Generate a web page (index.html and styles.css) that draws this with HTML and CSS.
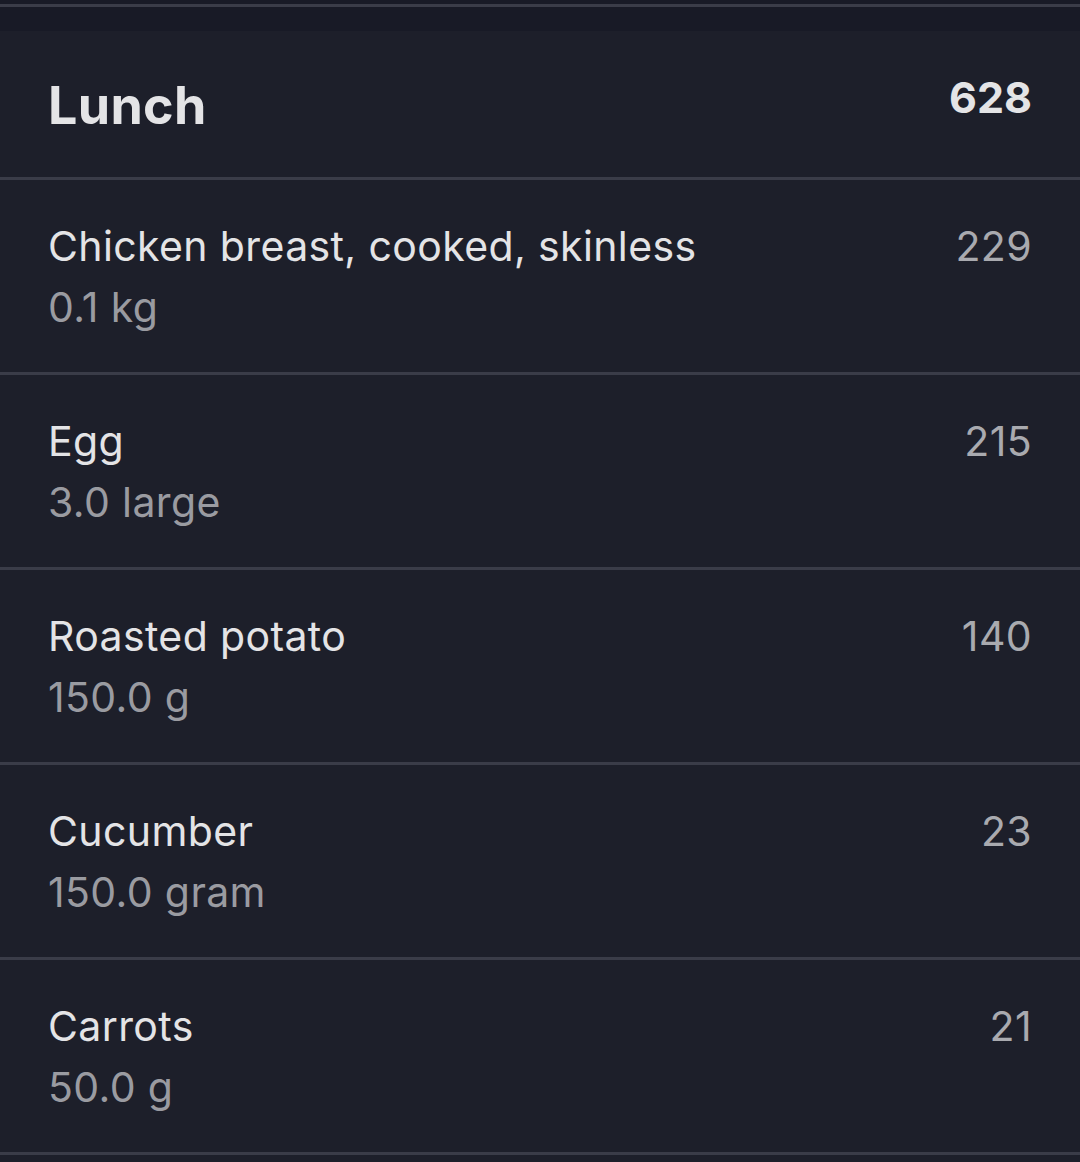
FILE: index.html
```html
<!DOCTYPE html>
<html>
<head>
<meta charset="utf-8">
<link rel="stylesheet" href="styles.css">
</head>
<body>
<div class="topbar"><div class="topline"></div></div>
<div class="panel">
  <div class="header">
    <div class="title">Lunch</div>
    <div class="total">628</div>
  </div>
  <div class="item">
    <div class="info"><div class="name">Chicken breast, cooked, skinless</div><div class="qty">0.1 kg</div></div>
    <div class="cal">229</div>
  </div>
  <div class="item">
    <div class="info"><div class="name">Egg</div><div class="qty">3.0 large</div></div>
    <div class="cal">215</div>
  </div>
  <div class="item">
    <div class="info"><div class="name">Roasted potato</div><div class="qty">150.0 g</div></div>
    <div class="cal">140</div>
  </div>
  <div class="item">
    <div class="info"><div class="name">Cucumber</div><div class="qty">150.0 gram</div></div>
    <div class="cal">23</div>
  </div>
  <div class="item">
    <div class="info"><div class="name">Carrots</div><div class="qty">50.0 g</div></div>
    <div class="cal">21</div>
  </div>
</div>
</body>
</html>
```
FILE: styles.css
```css
html, body {
  margin: 0;
  padding: 0;
  background: #1d1f2a;
  font-family: Inter, "Noto Sans", sans-serif;
}
.topbar {
  height: 31px;
  background: #181a26;
  padding-top: 4px;
  box-sizing: border-box;
}
.topline {
  height: 3px;
  background: #3a3c48;
}
.panel {
  background: #1d1f2a;
}
.header {
  display: flex;
  justify-content: space-between;
  align-items: flex-start;
  height: 146px;
  padding: 0 48px 0 48px;
  border-bottom: 3px solid #3a3c48;
}
.title {
  font-size: 52px;
  font-weight: 700;
  color: #e4e4e6;
  line-height: 52px;
  padding-top: 49px;
  letter-spacing: 0.3px;
}
.total {
  font-size: 43px;
  font-weight: 700;
  color: #e4e4e6;
  line-height: 43px;
  padding-top: 45px;
}
.item {
  display: flex;
  justify-content: space-between;
  align-items: flex-start;
  height: 192px;
  padding: 0 48px 0 48px;
  border-bottom: 3px solid #3a3c48;
}
.info {
  padding-top: 36px;
}
.name {
  font-size: 41px;
  line-height: 61px;
  color: #e4e4e6;
  letter-spacing: 0.38px;
}
.qty {
  font-size: 41px;
  line-height: 61px;
  color: #9a9ba1;
  letter-spacing: 0.38px;
}
.cal {
  font-size: 41px;
  line-height: 61px;
  color: #a9aaaf;
  padding-top: 36px;
  letter-spacing: 0.38px;
}
```
